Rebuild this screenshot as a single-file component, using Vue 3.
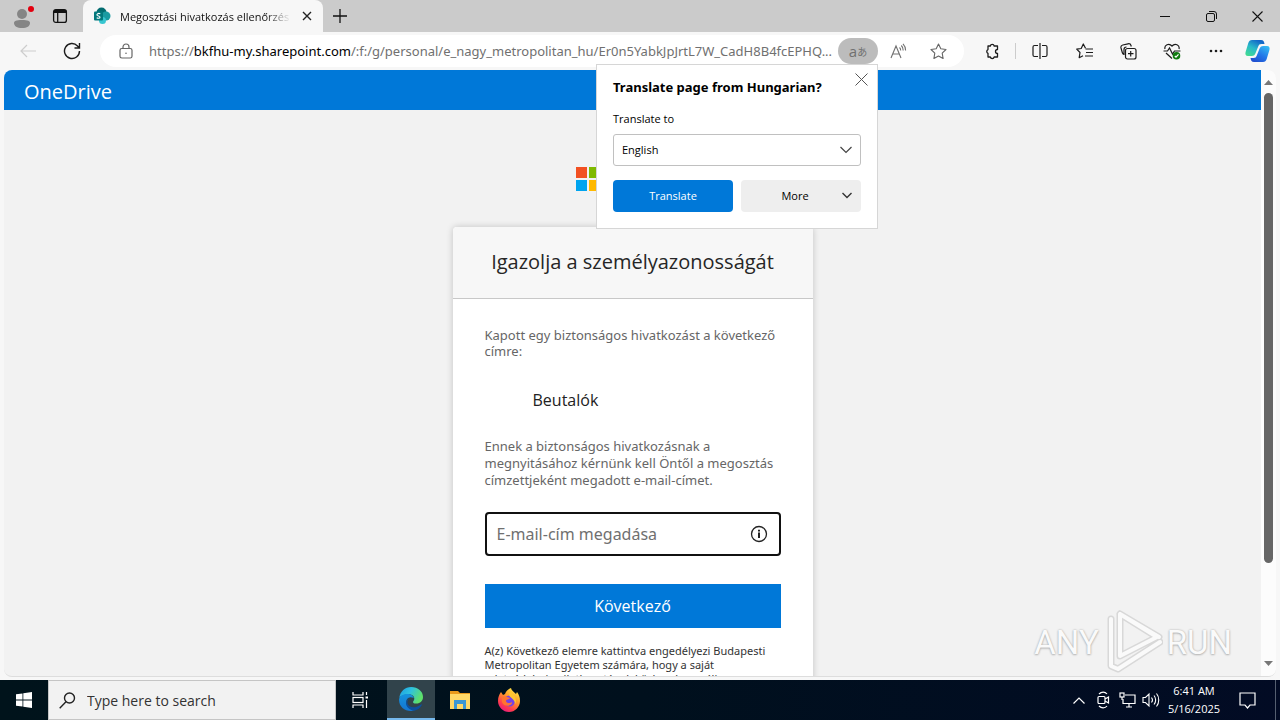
<script setup>
import { ref } from 'vue'

const email = ref('')
const language = ref('English')
</script>

<template>
  <div class="desktop">
    <header class="titlebar">
      <button class="profile" aria-label="Profile">
        <svg width="24" height="26" viewBox="0 0 24 26"><circle cx="12" cy="11" r="5" fill="#858585"/><path d="M4 20c0-2 2-3 8-3s8 1 8 3c0 3-3 5-8 5s-8-2-8-5z" fill="#858585"/><circle cx="21" cy="6" r="3" fill="#e3000f"/></svg>
      </button>
      <button class="tab-menu" aria-label="Tab actions menu">
        <svg width="16" height="16" viewBox="0 0 16 16" fill="none" stroke="#111" stroke-width="1.3"><rect x="1.6" y="1.6" width="12.8" height="12.8" rx="2.2"/><path d="M2 4.3h12M5.7 4v10" /><path d="M2 3h12" stroke-width="2"/></svg>
      </button>
      <div class="tab">
        <svg width="18" height="18" viewBox="0 0 18 18"><circle cx="8.500" cy="5.500" r="5" fill="#036c70"/><circle cx="13" cy="9" r="4.500" fill="#1a9ba1"/><circle cx="9.500" cy="13.500" r="3.500" fill="#37c6d0"/><rect x="1" y="4.500" width="9" height="9" rx="1" fill="#03787c"/><path d="M7.300 6.800c-2-1-3.800.2-3.200 1.400.5.900 2.700.7 2.900 1.800.2 1.300-1.900 1.600-3.300.8" fill="none" stroke="#fff" stroke-width="1.100"/></svg>
        <span class="tab-title">Megosztási hivatkozás ellenőrzés</span>
        <button class="tab-close" aria-label="Close tab"><svg width="10" height="10" viewBox="0 0 10 10" stroke="#222" stroke-width="1.400"><path d="M1 1l8 8M9 1l-8 8"/></svg></button>
      </div>
      <button class="new-tab" aria-label="New tab"><svg width="14" height="14" viewBox="0 0 14 14" stroke="#111" stroke-width="1.300"><path d="M7 0v14M0 7h14"/></svg></button>
      <div class="window-controls">
        <button aria-label="Minimize"><svg width="10" height="10" viewBox="0 0 10 10" stroke="#111"><path d="M0 5.500h10"/></svg></button>
        <button aria-label="Restore"><svg width="11" height="11" viewBox="0 0 11 11" fill="none" stroke="#111"><rect x=".5" y="2.500" width="8" height="8" rx="1.500"/><path d="M3 .5h5a2.500 2.500 0 0 1 2.500 2.500v5"/></svg></button>
        <button aria-label="Close"><svg width="11" height="11" viewBox="0 0 11 11" stroke="#111" stroke-width="1.100"><path d="M.5.5l10 10M10.500.5l-10 10"/></svg></button>
      </div>
    </header>

    <nav class="toolbar">
      <button class="tool" aria-label="Back"><svg width="16" height="14" viewBox="0 0 16 14" fill="none" stroke="#cdcdcd" stroke-width="1.200"><path d="M16 7H1M7 1L1 7l6 6"/></svg></button>
      <button class="tool" aria-label="Refresh"><svg width="18" height="18" viewBox="0 0 18 18" fill="none" stroke="#1c1c1c" stroke-width="1.400"><path d="M16.500 9a7.500 7.500 0 1 1-2-5.100L16.500 6M16.500 1v5h-5"/></svg></button>
      <div class="address">
        <svg class="lock" width="14" height="16" viewBox="0 0 14 16" fill="none" stroke="#666" stroke-width="1.200"><rect x="1" y="5.500" width="12" height="9.500" rx="1.800"/><path d="M4 5.500V4a3 3 0 0 1 6 0v1.500"/><circle cx="7" cy="10.200" r=".8" fill="#666" stroke="none"/></svg>
        <a class="url" href="#">https://<b>bkfhu-my.sharepoint.com</b>/:f:/g/personal/e_nagy_metropolitan_hu/Er0n5YabkJpJrtL7W_CadH8B4fcEPHQ...</a>
        <div class="translate-anchor">
          <button class="translate-toggle" aria-label="Translate"><span>a</span><span class="kana">あ</span></button>
          <section class="popup" aria-label="Translate page">
            <button class="popup-close" aria-label="Close"><svg width="13" height="13" viewBox="0 0 13 13" stroke="#555"><path d="M.5.5l12 12M12.500.5l-12 12"/></svg></button>
            <h2>Translate page from Hungarian?</h2>
            <label for="language">Translate to</label>
            <div class="select-wrap">
              <select id="language" v-model="language"><option>English</option><option>German</option></select>
              <svg width="12" height="8" viewBox="0 0 12 8" fill="none" stroke="#444" stroke-width="1.200"><path d="M.5 1L6 6.500 11.500 1"/></svg>
            </div>
            <div class="popup-actions">
              <button class="primary">Translate</button>
              <button class="more"><span>More</span><svg width="10" height="7" viewBox="0 0 10 7" fill="none" stroke="#333" stroke-width="1.400"><path d="M.5 1L5 5.500 9.500 1"/></svg></button>
            </div>
          </section>
        </div>
        <button class="in-pill" aria-label="Read aloud"><svg width="17" height="16" viewBox="0 0 17 16" fill="none" stroke="#707070" stroke-width="1.100"><path d="M1 15L6 3l5 12M2.800 11h6.400M9.500 4.500c.9.800 1.200 1.700 1.200 3M11.300 2.500c1.300 1.200 1.900 2.900 1.900 5M13 .8c1.700 1.700 2.600 3.900 2.600 6.700"/></svg></button>
        <button class="in-pill" aria-label="Add to favorites"><svg width="17" height="17" viewBox="0 0 17 17" fill="none" stroke="#666" stroke-width="1.100" stroke-linejoin="round"><path d="M8.500 1l2.300 4.800 5.200.7-3.800 3.700.9 5.300-4.600-2.500-4.600 2.500.9-5.300L1 6.500l5.200-.7z"/></svg></button>
      </div>
      <button class="tool extension" aria-label="Extensions"><svg width="16" height="17" viewBox="0 0 16 17" fill="none" stroke="#1c1c1c" stroke-width="1.300" stroke-linejoin="round"><path d="M4 3h2.300a2 2 0 0 1 3.900 0H13.500v3.500a2 2 0 0 0 0 4V14h-3.300a2 2 0 0 1-3.900 0H4v-3.700a2 2 0 0 1 0-3.700z"/></svg></button>
      <span class="divider"></span>
      <button class="tool" aria-label="Split screen"><svg width="16" height="16" viewBox="0 0 16 16" fill="none" stroke="#1c1c1c" stroke-width="1.200"><path d="M6 2.500H2.500a1.500 1.500 0 0 0-1.500 1.500v8a1.500 1.500 0 0 0 1.500 1.500H6M10 2.500h3.500A1.500 1.500 0 0 1 15 4v8a1.500 1.500 0 0 1-1.500 1.500H10M8 0v16"/></svg></button>
      <button class="tool" aria-label="Favorites"><svg width="17" height="16" viewBox="0 0 17 16" fill="none" stroke="#1c1c1c" stroke-width="1.200" stroke-linejoin="round"><path d="M9.500 5.200L7.300 1 5.200 5.500l-4.500.7 3.300 3.300-.8 5.200 3.800-2M9.500 6H17M10 9.500h7M9 13h8"/></svg></button>
      <button class="tool" aria-label="Collections"><svg width="17" height="17" viewBox="0 0 17 17" fill="none" stroke="#1c1c1c" stroke-width="1.200"><rect x="5.500" y="5.500" width="10.500" height="10.500" rx="2"/><path d="M10.700 8v5.500M8 10.700h5.500M4 11.500A3 3 0 0 1 2.300 9.500L1 5a2.500 2.500 0 0 1 1.800-3L8 .8a2.500 2.500 0 0 1 3 1.700l.3 1M4 12V6.500A2.500 2.500 0 0 1 6.500 4"/></svg></button>
      <button class="tool" aria-label="Browser essentials"><svg width="18" height="17" viewBox="0 0 18 17" fill="none" stroke="#1c1c1c" stroke-width="1.200"><path d="M2 6C1 2 6-.5 9 3c3-3.500 8-1 7 3M.5 8h4L6.500 5l3 6 2-3h6M3 10l6 5.500"/><circle cx="13.500" cy="12.800" r="3.800" fill="#107c10" stroke="none"/><path d="M11.800 13l1.200 1.200 2.500-2.800" stroke="#fff"/></svg></button>
      <button class="tool" aria-label="Settings and more"><svg width="14" height="4" viewBox="0 0 14 4" fill="#1c1c1c"><circle cx="2" cy="2" r="1.300"/><circle cx="7" cy="2" r="1.300"/><circle cx="12" cy="2" r="1.300"/></svg></button>
      <button class="tool copilot" aria-label="Copilot">
        <svg width="25" height="24" viewBox="0 0 25 24"><defs><linearGradient id="cp1" x1="0" y1="1" x2=".6" y2="0"><stop offset="0" stop-color="#45e08a"/><stop offset=".55" stop-color="#29b9c9"/><stop offset="1" stop-color="#1268c8"/></linearGradient><linearGradient id="cp2" x1="1" y1="0" x2=".3" y2="1"><stop offset="0" stop-color="#35c4f5"/><stop offset=".6" stop-color="#2276e8"/><stop offset="1" stop-color="#2050d0"/></linearGradient></defs><path d="M7 1h9c2.500 0 3 1.500 3.500 4h-3c-2 0-2.700.8-3.300 2.500l-2.600 6.500c-.8 2-1.600 3-4 3H3c-2.500 0-3-2-2.400-4L3.300 4C4 2 5 1 7 1z" fill="url(#cp1)"/><path d="M18 23H9c-2.500 0-3-1.500-3.500-4h3c2 0 2.700-.8 3.300-2.500L14.400 10c.8-2 1.600-3 4-3H22c2.500 0 3 2 2.400 4l-2.700 9c-.7 2-1.700 3-3.700 3z" fill="url(#cp2)"/></svg>
      </button>
    </nav>

    <div class="viewport-frame">
      <div class="page">
        <div class="suite-bar">OneDrive</div>
        <main>
          <div class="brand">
            <svg width="24" height="24" viewBox="0 0 24 24"><path fill="#f25022" d="M0 0h11v11H0z"/><path fill="#7fba00" d="M13 0h11v11H13z"/><path fill="#00a4ef" d="M0 13h11v11H0z"/><path fill="#ffb900" d="M13 13h11v11H13z"/></svg>
          </div>
          <form class="card" @submit.prevent>
            <h1>Igazolja a személyazonosságát</h1>
            <div class="card-body">
              <p class="intro">Kapott egy biztonságos hivatkozást a következő címre:</p>
              <div class="resource">Beutalók</div>
              <p>Ennek a biztonságos hivatkozásnak a megnyitásához kérnünk kell Öntől a megosztás címzettjeként megadott e-mail-címet.</p>
              <div class="email">
                <input v-model="email" type="email" placeholder="E-mail-cím megadása" aria-label="E-mail-cím megadása" />
                <svg width="18" height="18" viewBox="0 0 18 18"><circle cx="9" cy="9" r="7.500" fill="none" stroke="#222" stroke-width="1.300"/><path d="M8 7.500h2v5.500H8zM8 4.800h2v1.700H8z" fill="#222"/></svg>
              </div>
              <button class="next">Következő</button>
              <p class="legal">A(z) Következő elemre kattintva engedélyezi Budapesti Metropolitan Egyetem számára, hogy a saját<br>adatvédelmi nyilatkozatának közben használja</p>
            </div>
          </form>
        </main>
      </div>
      <div class="scrollbar">
        <svg width="9" height="5" viewBox="0 0 9 5"><path d="M0 5l4.500-5L9 5z" fill="#777"/></svg>
        <div class="track"><div class="thumb"></div></div>
        <svg width="9" height="5" viewBox="0 0 9 5"><path d="M0 0l4.500 5L9 0z" fill="#777"/></svg>
      </div>
      <div class="watermark">
        <span>ANY</span>
        <svg width="60" height="64" viewBox="0 0 60 64" fill="none" stroke-linejoin="round" stroke-linecap="round"><g stroke="#d8d8d8" stroke-width="7"><path d="M17 4v42L54 27zM17 4L56 27M8 9v47l7 3 42-27"/></g><g stroke="#fafafa" stroke-width="4"><path d="M17 4v42L54 27zM17 4L56 27M8 9v47l7 3 42-27"/></g></svg>
        <span>RUN</span>
      </div>
    </div>

    <footer class="taskbar">
      <button class="start" aria-label="Start"><svg width="16" height="16" viewBox="0 0 16 16" fill="#fff"><path d="M0 2.300L6.500 1.400v6.100H0zM7.300 1.300L16 0v7.500H7.300zM0 8.400h6.500v6.200L0 13.700zM7.300 8.400H16V16l-8.700-1.300z"/></svg></button>
      <div class="search">
        <svg width="17" height="17" viewBox="0 0 17 17" fill="none" stroke="#222" stroke-width="1.400"><circle cx="10.500" cy="6" r="5"/><path d="M7 9.700L.7 16.300"/></svg>
        <input type="text" placeholder="Type here to search" aria-label="Type here to search" />
      </div>
      <button class="app" aria-label="Task view"><svg width="17" height="16" viewBox="0 0 17 16" fill="none" stroke="#fff" stroke-width="1.200"><path d="M1 0v3h10V0M1 16v-3h10v3"/><rect x="1" y="5.500" width="10" height="5"/><path d="M14.500 0v3M14.500 8v8"/><path d="M13.500 5.500h2.500" stroke-width="2"/></svg></button>
      <button class="app active" aria-label="Microsoft Edge">
        <svg width="24" height="24" viewBox="0 0 24 24"><defs><linearGradient id="edgeTop" x1="0" y1="0" x2="1" y2=".4"><stop offset="0" stop-color="#1b9de2"/><stop offset=".5" stop-color="#2fc2df"/><stop offset="1" stop-color="#5ee06a"/></linearGradient><linearGradient id="edgeLow" x1="0" y1="0" x2="0" y2="1"><stop offset="0" stop-color="#1593dd"/><stop offset="1" stop-color="#1475d1"/></linearGradient></defs><path d="M.3 11C1 4.500 6 0 12.200 0 19 0 24 4.500 24 10c0 4-3 6.500-6.500 6.500-3 0-4.200-1.200-3-2.600 2-2.400.3-6.700-4.500-6.700C5.500 7.200 1.500 9 .3 11z" fill="url(#edgeTop)"/><path d="M.1 12C.7 8.700 4.500 6.800 9.500 7c3.300.2 5 2.300 5.300 4C9.500 8.500 7 12 7.300 15c.4 4.300 4 7.500 8 8.600C7 25.500-.6 20 .1 12z" fill="url(#edgeLow)"/><path d="M10 11.500c-5 5.500 2 13 12 6 .8-.5 1 .2.700.7-1.700 3-4.500 5-7.600 5.500C8.500 23 3.500 15.500 10 11.500z" fill="#0c4f9e"/></svg>
      </button>
      <button class="app" aria-label="File Explorer"><svg width="22" height="20" viewBox="0 0 22 20"><path d="M1 1h8l2 2h10v6H1z" fill="#e99a1c"/><path d="M1 4h20v15H1z" fill="#ffd867"/><path d="M5 10h12v9h-3v-5H8v5H5z" fill="#3b97d3"/><path d="M8 14h6v2H8z" fill="#ffd867"/></svg></button>
      <button class="app" aria-label="Firefox">
        <svg width="24" height="24" viewBox="0 0 24 24"><defs><linearGradient id="fx" x1=".8" y1="0" x2=".2" y2="1"><stop offset="0" stop-color="#fff04a"/><stop offset=".4" stop-color="#ff9a28"/><stop offset=".75" stop-color="#ff3b4e"/><stop offset="1" stop-color="#e31587"/></linearGradient></defs><path d="M4 4l2 3 2-1c1-3 3-5 6-6 0 2 3 4 5 6l1-2c2 3 3 5 3 9 0 6-5 11-11 11S1 19 1 13c0-4 1-6 3-9z" fill="url(#fx)"/><circle cx="12.500" cy="13" r="5.500" fill="#7542e5"/><path d="M5 9c3-1 5 0 8 1-1 2-4 1-4 3s4 3 6 1c1 4-8 6-10 0z" fill="#ff7430"/><path d="M14 2c0 3 5 5 5 11 0 2-1 3-1 3 0-5-5-6-6-9z" fill="#ffc52f"/></svg>
      </button>
      <div class="tray">
        <button aria-label="Show hidden icons"><svg width="12" height="7" viewBox="0 0 12 7" fill="none" stroke="#fff" stroke-width="1.200"><path d="M.5 6.500L6 1l5.500 5.500"/></svg></button>
        <button aria-label="Camera"><svg width="13" height="18" viewBox="0 0 13 18" fill="none" stroke="#fff" stroke-width="1.200"><rect x="1" y="5.500" width="7" height="7" rx="1"/><path d="M8 8l3.500-2v6L8 10M2 3c2.500-2.500 6-2.500 8 0M2 15c2.500 2.500 6 2.500 8 0"/></svg></button>
        <button aria-label="Network"><svg width="17" height="16" viewBox="0 0 17 16" fill="none" stroke="#fff" stroke-width="1.200"><path d="M6 3h10v8.500H4V7M10 11.500V15M7 15h6"/><rect x="1" y="1" width="4" height="4"/><path d="M3 5v3"/></svg></button>
        <button aria-label="Volume"><svg width="18" height="16" viewBox="0 0 18 16" fill="none" stroke="#fff" stroke-width="1.100"><path d="M1 5.500h2.500L7 2v12l-3.500-3.500H1zM9.500 5.500c1.200 1.500 1.200 3.500 0 5M12 3.500c2.200 2.500 2.200 6.500 0 9M14.500 1.500c3 3.500 3 9.500 0 13"/></svg></button>
        <time class="clock" datetime="2025-05-16T06:41"><span>6:41 AM</span><span>5/16/2025</span></time>
        <button class="notifications" aria-label="Notifications"><svg width="17" height="17" viewBox="0 0 17 17" fill="none" stroke="#fff" stroke-width="1.200"><path d="M1 1h15v12h-5l-2.500 3L6 13H1z"/></svg></button>
        <span class="show-desktop"></span>
      </div>
    </footer>
  </div>
</template>

<style>
body { margin: 0; }
</style>

<style scoped>
* { box-sizing: border-box; }
.desktop {
  height: 100vh;
  display: flex;
  flex-direction: column;
  overflow: hidden;
  background: #f7f7f7;
  color: #111;
  font-family: "Open Sans", "Noto Sans", sans-serif;
  font-size: 12px;
}
button {
  display: flex;
  align-items: center;
  justify-content: center;
  padding: 0;
  border: 0;
  background: none;
  color: inherit;
  font: inherit;
}
svg { flex: none; display: block; }
input, select { font: inherit; }

.titlebar { flex: none; height: 32px; display: flex; background: #cbcbcb; }
.profile { width: 44px; }
.tab-menu { width: 32px; }
.tab {
  width: 240px;
  margin-left: 7px;
  padding-left: 10px;
  display: flex;
  align-items: center;
  background: #f7f7f7;
  border-radius: 8px 8px 0 0;
}
.tab-title {
  flex: 1;
  min-width: 0;
  margin-left: 9px;
  overflow: hidden;
  white-space: nowrap;
  font-size: 11px;
  mask-image: linear-gradient(90deg, #000 85%, transparent);
}
.tab-close { width: 32px; height: 32px; }
.new-tab { width: 34px; }
.window-controls { display: flex; margin-left: auto; }
.window-controls button { width: 46px; }

.toolbar { flex: none; height: 38px; padding-left: 6px; display: flex; align-items: center; }
.tool { width: 44px; height: 30px; }
.copilot { width: 42px; padding-right: 3px; }
.extension { margin-left: 6px; }
.divider { width: 1px; height: 16px; margin: 0 2px 0 1px; background: #ccc; }
.address {
  flex: 1;
  min-width: 0;
  height: 32px;
  margin-left: 6px;
  padding: 0 6px 0 19px;
  display: flex;
  align-items: center;
  border-radius: 16px;
  background: #fff;
}
.url {
  flex: 1;
  min-width: 0;
  margin-left: 16px;
  overflow: hidden;
  white-space: nowrap;
  color: #707070;
  font-family: "Noto Sans", sans-serif;
  font-size: 13px;
  text-decoration: none;
}
.url b { color: #000; font-weight: 400; }
.in-pill { width: 40px; height: 28px; }
.translate-anchor { position: relative; }
.translate-toggle {
  width: 40px;
  height: 26px;
  border-radius: 13px;
  background: #bcbcbc;
  color: #707070;
  font-size: 15px;
}
.kana { font-family: "Noto Sans CJK JP", sans-serif; font-size: 10px; }

.popup {
  position: absolute;
  z-index: 5;
  top: 26px;
  right: 0;
  width: 282px;
  padding: 14px 16px 16px;
  border: 1px solid #d6d6d6;
  background: #fff;
  color: #000;
}
.popup-close { position: absolute; top: 4px; right: 6px; width: 20px; height: 20px; }
.popup h2 {
  margin: 0 0 16px;
  font-family: "Noto Sans", sans-serif;
  font-size: 13px;
  line-height: 16px;
  font-weight: 700;
  white-space: nowrap;
}
.popup label { display: block; margin-bottom: 7px; font-size: 11px; line-height: 16px; }
.select-wrap { display: grid; align-items: center; }
.select-wrap > * { grid-area: 1 / 1; }
.select-wrap svg { justify-self: end; margin-right: 9px; pointer-events: none; }
select {
  width: 100%;
  height: 32px;
  padding: 0 8px 2px;
  appearance: none;
  border: 1px solid #c0c0c0;
  border-radius: 3px;
  background: #fff;
  color: #000;
  font-size: 11px;
}
.popup-actions { display: grid; grid-template-columns: 1fr 1fr; gap: 8px; margin-top: 14px; font-size: 11px; }
.popup-actions button { height: 32px; border-radius: 4px; }
.popup-actions .primary { padding-bottom: 2px; background: #0078d8; color: #fff; }
.popup-actions .more { padding: 0 9px 1px 7px; background: #eee; }
.more span { flex: 1; }

.viewport-frame {
  position: relative;
  flex: 1;
  min-height: 0;
  display: flex;
  margin: 0 4px 3px;
  overflow: hidden;
  border: 0 solid #ddd;
  border-bottom-width: 1px;
  border-radius: 8px;
  background: #f2f2f2;
}
.page { flex: 1; min-width: 0; overflow: hidden; }
.suite-bar {
  height: 40px;
  padding-left: 20px;
  background: #0078d8;
  color: #fff;
  font-size: 20px;
  line-height: 43px;
}
main { display: flex; flex-direction: column; align-items: center; }
.brand { width: 113px; margin: 57px 0 36px; }
.card {
  width: 360px;
  border-radius: 4px 4px 0 0;
  background: #fff;
  box-shadow: 0 0 7px rgb(0 0 0 / 20%);
}
h1 {
  margin: 0;
  height: 72px;
  border-bottom: 1px solid #c8c8c8;
  border-radius: 4px 4px 0 0;
  background: #f7f7f7;
  color: #262626;
  font-size: 20px;
  line-height: 70px;
  font-weight: 400;
  text-align: center;
  white-space: nowrap;
}
.card-body {
  padding: 28px 32px;
  color: #666;
  font-family: "Noto Sans", sans-serif;
  font-size: 13px;
  line-height: 17px;
}
p { margin: 0; }
.intro { line-height: 16px; }
.resource {
  margin: 29px 0 26px;
  padding-left: 48px;
  color: #222;
  font-family: "Open Sans", sans-serif;
  font-size: 16px;
  line-height: 24px;
}
.email { display: grid; align-items: center; margin-top: 23px; }
.email > * { grid-area: 1 / 1; }
.email svg { justify-self: end; margin-right: 13px; }
.email input {
  width: 100%;
  height: 44px;
  padding: 0 40px 0 10px;
  border: 2px solid #111;
  border-radius: 4px;
  background: #fff;
  font-size: 16px;
}
.email input::placeholder { color: #707070; opacity: 1; }
.next {
  width: 100%;
  height: 44px;
  margin: 28px 0 16px;
  background: #0078d8;
  color: #fff;
  font-family: "Open Sans", sans-serif;
  font-size: 16px;
}
.legal { color: #333; font-size: 11px; line-height: 14px; white-space: nowrap; white-space: normal; }

.scrollbar { width: 15px; padding: 10px 0; display: flex; flex-direction: column; align-items: center; background: #fcfcfc; }
.track { flex: 1; width: 9px; padding: 8px 0; }
.thumb { height: 84%; border-radius: 5px; background: #666; }
.watermark {
  position: absolute;
  right: 44px;
  bottom: 2px;
  display: flex;
  align-items: center;
  gap: 4px;
  color: #fafafa;
  font-family: Roboto, sans-serif;
  font-size: 33px;
  text-shadow: 0 0 2px #aaa, 0 1px 2px #bbb;
}

.taskbar {
  flex: none;
  height: 40px;
  display: flex;
  background: linear-gradient(90deg, #00131b, #00101d 50%, #020b24);
  color: #fff;
}
.start { width: 48px; }
.search {
  width: 288px;
  padding: 0 10px;
  display: flex;
  align-items: center;
  gap: 11px;
  border: 1px solid #c5c5c5;
  background: #f2f2f2;
}
.search input { flex: 1; min-width: 0; padding: 0; border: 0; background: none; font-size: 14px; }
.search input::placeholder { color: #333; opacity: 1; }
.app { width: 48px; margin-right: 1px; }
.app.active { margin-left: 2px; border-bottom: 2px solid #76b9ed; background: #31434b; }
.tray { display: flex; margin-left: auto; }
.tray button { width: 24px; }
.clock {
  width: 62px;
  display: flex;
  flex-direction: column;
  align-items: center;
  justify-content: center;
  font-size: 11px;
  line-height: 18px;
  white-space: nowrap;
}
.tray .notifications { width: 50px; padding-right: 6px; }
.show-desktop { width: 5px; border-left: 1px solid #555f70; }
</style>
